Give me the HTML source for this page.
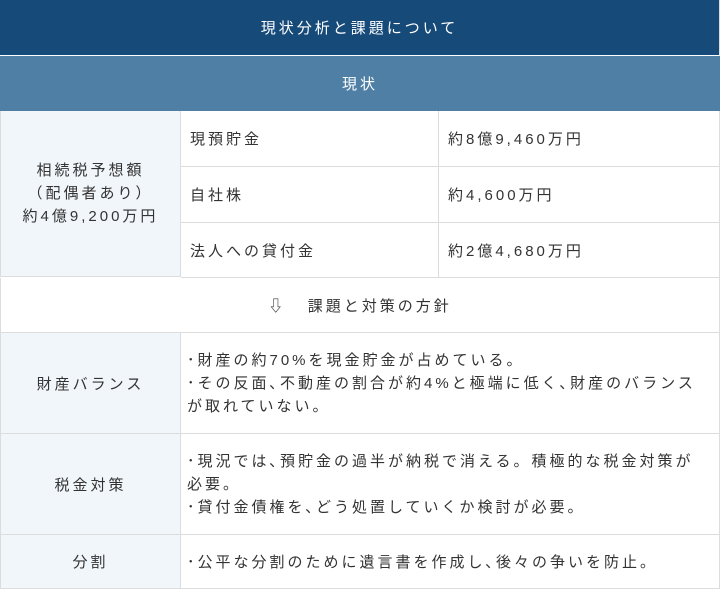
<!DOCTYPE html>
<html><head><meta charset="utf-8"><style>
*{margin:0;padding:0;box-sizing:border-box}
body{width:720px;height:589px;background:#fff;font-family:"Liberation Sans","Noto Sans CJK JP",sans-serif;font-size:15px;color:#333;letter-spacing:3px;position:relative;overflow:hidden}
.c{position:absolute;display:flex;align-items:center;border-right:1px solid #dcdcdc;border-bottom:1px solid #dcdcdc;white-space:nowrap}
.ctr{justify-content:center;text-align:center}
.l{background:#f1f6fa}
.p{padding-left:9px}
.h1{background:#164a79;color:#fff;border-bottom:1px solid #fff}
.h2{background:#4f7fa4;color:#fff;border:none}
.t{line-height:23px}
</style></head><body>
<div class="c ctr h1" style="left:0;top:0;width:720px;height:56px">現状分析と課題について</div>
<div class="c ctr h2" style="left:0;top:56px;width:720px;height:55px">現状</div>
<div class="c ctr l t" style="left:0;top:111px;width:181px;height:166px;border-left:1px solid #dcdcdc">相続税予想額<br>（配偶者あり）<br>約4億9,200万円</div>
<div class="c p" style="left:181px;top:111px;width:258px;height:56px">現預貯金</div>
<div class="c p" style="left:439px;top:111px;width:281px;height:56px">約8億9,460万円</div>
<div class="c p" style="left:181px;top:167px;width:258px;height:56px">自社株</div>
<div class="c p" style="left:439px;top:167px;width:281px;height:56px">約4,600万円</div>
<div class="c p" style="left:181px;top:223px;width:258px;height:55px">法人への貸付金</div>
<div class="c p" style="left:439px;top:223px;width:281px;height:55px">約2億4,680万円</div>
<div class="c ctr" style="left:0;top:278px;width:720px;height:55px;border-left:1px solid #dcdcdc">⇩&nbsp;&nbsp;&nbsp;課題と対策の方針</div>
<div class="c ctr l" style="left:0;top:333px;width:181px;height:101px;border-left:1px solid #dcdcdc">財産バランス</div>
<div class="c p t" style="left:181px;top:333px;width:539px;height:101px;padding-left:6px"><div>･財産の約70%を現金貯金が占めている。<br>･その反面､不動産の割合が約4%と極端に低く､財産のバランス<br>が取れていない。</div></div>
<div class="c ctr l" style="left:0;top:434px;width:181px;height:101px;border-left:1px solid #dcdcdc">税金対策</div>
<div class="c p t" style="left:181px;top:434px;width:539px;height:101px;padding-left:6px"><div>･現況では､預貯金の過半が納税で消える。積極的な税金対策が<br>必要。<br>･貸付金債権を､どう処置していくか検討が必要。</div></div>
<div class="c ctr l" style="left:0;top:535px;width:181px;height:54px;border-left:1px solid #dcdcdc">分割</div>
<div class="c p" style="left:181px;top:535px;width:539px;height:54px;padding-left:6px">･公平な分割のために遺言書を作成し､後々の争いを防止。</div>
</body></html>
